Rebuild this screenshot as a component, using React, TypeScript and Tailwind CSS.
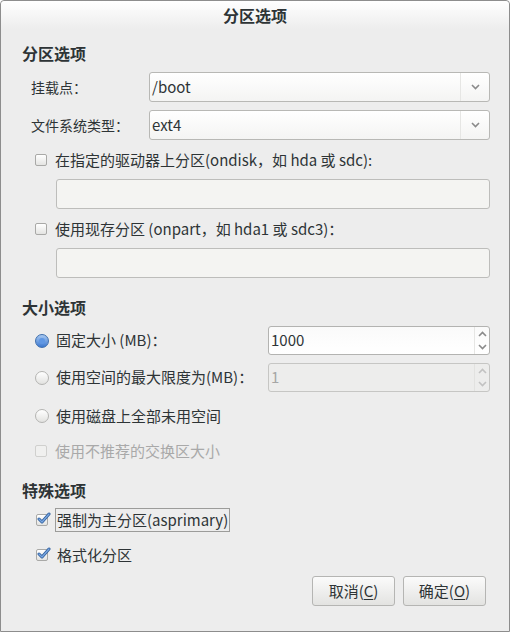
import * as React from "react";

function ChevronDown({ className = "" }: { className?: string }) {
  return (
    <svg width="9" height="6" viewBox="0 0 9 6" className={className}>
      <path d="M1 1 L4.5 4.5 L8 1" fill="none" stroke="currentColor" strokeWidth="1.6" />
    </svg>
  );
}

function ChevronUp({ className = "" }: { className?: string }) {
  return (
    <svg width="9" height="6" viewBox="0 0 9 6" className={className}>
      <path d="M1 5 L4.5 1.5 L8 5" fill="none" stroke="currentColor" strokeWidth="1.6" />
    </svg>
  );
}

function Combo({ value }: { value: string }) {
  return (
    <div className="flex h-[30px] flex-1 rounded-[3px] border border-[#b8b8b5] bg-linear-to-b from-white to-[#f4f4f3]">
      <span className="flex flex-1 items-center pl-[2px] text-[15px] text-[#2e3436]">{value}</span>
      <span className="flex w-[29px] items-center justify-center border-l border-[#e6e6e4] text-[#8a8a8a]">
        <ChevronDown />
      </span>
    </div>
  );
}

function Entry() {
  return <div className="ml-[34px] h-[30px] rounded-[3px] border border-[#bdbdbb] bg-[#f4f4f2]" />;
}

function Spin({ value, disabled }: { value: string; disabled?: boolean }) {
  return (
    <div
      className={
        disabled
          ? "flex h-[29px] flex-1 rounded-[3px] border border-[#c6c6c4] bg-[#ededec]"
          : "flex h-[29px] flex-1 rounded-[3px] border border-[#b3b3b1] bg-linear-to-b from-[#fafafa] to-white"
      }
    >
      <span
        className={
          disabled
            ? "flex flex-1 items-center pl-[2px] text-[15px] text-[#a6a6a6]"
            : "flex flex-1 items-center pl-[2px] text-[15px] text-[#2e3436]"
        }
      >
        {value}
      </span>
      <span
        className={
          disabled
            ? "flex w-[15px] flex-col items-center justify-between border-l border-[#e2e2e0] py-[4px] text-[#c2c2c2]"
            : "flex w-[15px] flex-col items-center justify-between border-l border-[#e6e6e4] py-[4px] text-[#8a8a8a]"
        }
      >
        <ChevronUp />
        <ChevronDown />
      </span>
    </div>
  );
}

function CheckBox({ checked, disabled }: { checked?: boolean; disabled?: boolean }) {
  return (
    <span className="relative flex h-[12px] w-[12px] shrink-0">
      <span
        className={
          disabled
            ? "h-[12px] w-[12px] rounded-[2px] border border-[#d0d0ce] bg-[#f0f0ef]"
            : "h-[12px] w-[12px] rounded-[2px] border border-[#a9a9a7] bg-linear-to-b from-white to-[#e4e4e2]"
        }
      />
      {checked && (
        <svg width="14" height="13" viewBox="0 0 14 13" className="absolute -top-[2px] left-[1px]">
          <path d="M2 7 L5 10 L12 2" fill="none" stroke="#2f5f9e" strokeWidth="3" strokeLinecap="round" strokeLinejoin="round" />
          <path d="M2 7 L5 10 L12 2" fill="none" stroke="#7aa7e0" strokeWidth="1.3" strokeLinecap="round" strokeLinejoin="round" />
        </svg>
      )}
    </span>
  );
}

function Radio({ checked }: { checked?: boolean }) {
  if (checked) {
    return (
      <span className="flex h-[14px] w-[14px] shrink-0 items-center justify-center rounded-full border border-[#3f6fae] bg-linear-to-b from-[#a9c9f0] to-[#3b78d0]">
        <span className="h-[6px] w-[6px] rounded-full bg-[#5f97e4]" />
      </span>
    );
  }
  return (
    <span className="h-[14px] w-[14px] shrink-0 rounded-full border border-[#b4b4b2] bg-linear-to-b from-white to-[#e2e2e0]" />
  );
}

function Heading({ children, className = "" }: { children: React.ReactNode; className?: string }) {
  return (
    <div className={"flex h-[20px] items-center text-[16px] font-bold text-[#2e3436] " + className}>{children}</div>
  );
}

function Button({ label, mnemonic }: { label: string; mnemonic: string }) {
  return (
    <button className="flex h-[30px] w-[83px] items-center justify-center rounded-[3px] border border-[#b5b5b3] bg-linear-to-b from-[#fbfbfb] to-[#e3e3e1] text-[15px] text-[#2e3436]">
      {label}(<span className="underline underline-offset-2">{mnemonic}</span>)
    </button>
  );
}

export default function App() {
  return (
    <div className="flex h-[632px] w-[510px] flex-col rounded-t-[4px] border border-[#8d8d8d] bg-[#ededed] font-['Noto_Sans_CJK_SC','DejaVu_Sans',sans-serif] text-[#2e3436]">
      <div className="flex h-[28px] items-center justify-center rounded-t-[4px] bg-linear-to-b from-white to-[#ededed] text-[16px] font-bold">
        分区选项
      </div>

      <div className="flex flex-col pl-[21px] pr-[19px]">
        <Heading className="mt-[14px]">分区选项</Heading>

        <div className="mt-[9px] flex items-center">
          <span className="w-[127px] pl-[9px] text-[14px]">挂载点：</span>
          <Combo value="/boot" />
        </div>
        <div className="mt-[8px] flex items-center">
          <span className="w-[127px] pl-[9px] text-[14px]">文件系统类型：</span>
          <Combo value="ext4" />
        </div>

        <label className="mt-[10px] flex h-[20px] items-center gap-[8px] pl-[13px] text-[15px]">
          <CheckBox />
          <span>在指定的驱动器上分区(ondisk，如 hda 或 sdc):</span>
        </label>
        <div className="mt-[9px]">
          <Entry />
        </div>

        <label className="mt-[10px] flex h-[20px] items-center gap-[8px] pl-[13px] text-[15px]">
          <CheckBox />
          <span>使用现存分区 (onpart，如 hda1 或 sdc3)：</span>
        </label>
        <div className="mt-[9px]">
          <Entry />
        </div>

        <Heading className="mt-[19px]">大小选项</Heading>

        <div className="mt-[9px] flex items-center">
          <label className="flex w-[246px] items-center gap-[7px] pl-[13px] text-[15px]">
            <Radio checked />
            <span>固定大小 (MB)：</span>
          </label>
          <Spin value="1000" />
        </div>
        <div className="mt-[8px] flex items-center">
          <label className="flex w-[246px] items-center gap-[7px] pl-[13px] text-[15px]">
            <Radio />
            <span>使用空间的最大限度为(MB)：</span>
          </label>
          <Spin value="1" disabled />
        </div>

        <label className="mt-[14px] flex h-[20px] items-center gap-[7px] pl-[13px] text-[15px]">
          <Radio />
          <span>使用磁盘上全部未用空间</span>
        </label>

        <label className="mt-[15px] flex h-[20px] items-center gap-[8px] pl-[13px] text-[15px] text-[#a9a9a9]">
          <CheckBox disabled />
          <span>使用不推荐的交换区大小</span>
        </label>

        <Heading className="mt-[19px]">特殊选项</Heading>

        <label className="mt-[8px] flex h-[24px] items-center gap-[7px] pl-[14px] text-[15px]">
          <CheckBox checked />
          <span className="flex h-[24px] items-center border border-[#9c9c9a] px-[1px]">强制为主分区(asprimary)</span>
        </label>
        <label className="mt-[11px] flex h-[24px] items-center gap-[7px] pl-[14px] text-[15px]">
          <CheckBox checked />
          <span className="flex h-[24px] items-center border border-transparent px-[1px]">格式化分区</span>
        </label>

        <div className="mt-[9px] flex justify-end gap-[8px] pr-[4px]">
          <Button label="取消" mnemonic="C" />
          <Button label="确定" mnemonic="O" />
        </div>
      </div>
    </div>
  );
}
